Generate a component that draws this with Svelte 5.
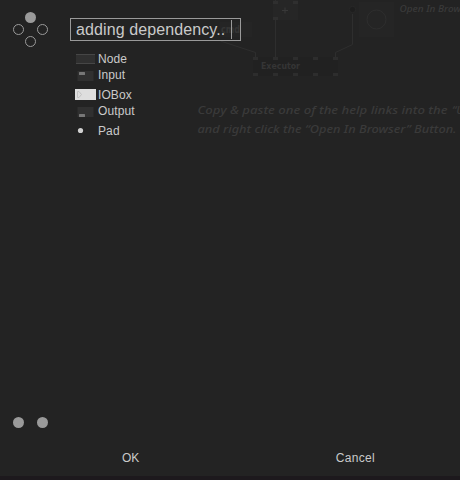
<script>
  const items = [
    { kind: 'node', label: 'Node', gap: 1 },
    { kind: 'input', label: 'Input', gap: 2 },
    { kind: 'iobox', label: 'IOBox', gap: 6 },
    { kind: 'output', label: 'Output', gap: 2 },
    { kind: 'pad', label: 'Pad', gap: 6 }
  ];
  const pins = [255, 275, 295, 315, 335];
</script>

<main>
  <svg class="patch" width="460" height="480" viewBox="0 0 460 480" aria-hidden="true">
    <rect x="220" y="22" width="32" height="15" fill="#252525" />
    <text x="221" y="33" font-size="10" font-weight="bold" textLength="19" lengthAdjust="spacingAndGlyphs">cmd</text>
    <rect x="273" y="0" width="25" height="20" fill="#262626" />
    <g fill="#2f2f2f">
      <rect x="273" y="1" width="5" height="3" />
      <rect x="293" y="1" width="5" height="3" />
      <rect x="273" y="17" width="5" height="3" />
    </g>
    <path d="M282 10.500h6M285 7.500v6" stroke="#383838" fill="none" />
    <g stroke="#2e2e2e" fill="none">
      <path d="M220.500 41L255.500 52.500V58M275.500 0V2M275.500 20V58M352.500 14V44.500L335.500 52.500V58" />
    </g>
    <rect x="253" y="57" width="85" height="19" fill="#212121" />
    <g fill="#2d2d2d">
      {#each pins as x}
        <rect x={x - 2} y="57" width="5" height="3" />
        <rect x={x - 2} y="73" width="5" height="3" />
      {/each}
    </g>
    <text x="261" y="69" font-size="9" font-weight="bold" textLength="39" lengthAdjust="spacingAndGlyphs">Executor</text>
    <circle cx="352.500" cy="9.500" r="3.200" fill="#1e1e1e" stroke="#282828" />
    <rect x="359" y="2" width="35" height="35" fill="#252525" />
    <circle cx="376.500" cy="19.500" r="9.500" fill="none" stroke="#2e2e2e" />
    <g class="note">
      <text x="399.500" y="12" font-size="9.500" textLength="75" lengthAdjust="spacingAndGlyphs">Open In Browser</text>
      <text x="197.500" y="114" font-size="11.500" textLength="250" lengthAdjust="spacingAndGlyphs">Copy &amp; paste one of the help links into the</text>
      <text x="452" y="114" font-size="11.500">“URL”</text>
      <text x="197.500" y="133" font-size="11.500" textLength="259" lengthAdjust="spacingAndGlyphs">and right click the “Open In Browser” Button.</text>
    </g>
  </svg>

  <div class="top">
    <svg class="dots" width="37" height="36" viewBox="0 0 37 36" aria-hidden="true">
      <circle cx="18.500" cy="5.500" r="5.500" fill="#9a9a9a" />
      <g fill="none" stroke="#9a9a9a">
        <circle cx="6.500" cy="17.500" r="5" />
        <circle cx="30.500" cy="17.500" r="5" />
        <circle cx="18.500" cy="29.500" r="5" />
      </g>
    </svg>
    <section>
      <div class="search"><span>adding dependency..</span><i></i></div>
      <ul>
        {#each items as item}
          <li style="margin-top: {item.gap}px">
            <svg width="22" height="14" viewBox="0 0 22 14" aria-hidden="true">
              {#if item.kind === 'node'}
                <rect x="1" y="2" width="19" height="10" fill="#303030" />
                <path d="M1 2.500h19M1 11.500h19" stroke="#464646" />
              {:else if item.kind === 'input'}
                <rect x="2.500" y="3" width="16" height="10" fill="#303030" />
                <rect x="4" y="4" width="6" height="3" rx="0.500" fill="#777" />
              {:else if item.kind === 'iobox'}
                <rect x="0" y="1" width="21" height="11" fill="#dedede" />
                <path d="M2.500 3.500H4L6.500 6.500L4 9.500H2.500Z" fill="none" stroke="#c2c2c2" />
              {:else if item.kind === 'output'}
                <rect x="2.500" y="3" width="16" height="10" fill="#303030" />
                <rect x="4" y="10" width="6" height="3" rx="0.500" fill="#777" />
              {:else}
                <circle cx="5.500" cy="6.500" r="2.600" fill="#d0d0d0" />
              {/if}
            </svg>
            <span>{item.label}</span>
          </li>
        {/each}
      </ul>
    </section>
  </div>

  <footer>
    <div class="pair"><i></i><i></i></div>
    <div class="buttons"><button>OK</button><button class="cancel">Cancel</button></div>
  </footer>
</main>

<style>
  :global(body) {
    background: #232323;
  }
  main {
    position: relative;
    display: flex;
    flex-direction: column;
    justify-content: space-between;
    box-sizing: border-box;
    width: 460px;
    height: 480px;
    overflow: hidden;
    background: #232323;
    border-bottom: 4px solid #1d191d;
    color: #cacaca;
    font-family: "Liberation Sans", Arial, sans-serif;
    font-size: 12px;
  }
  .patch {
    position: absolute;
    inset: 0;
  }
  .patch text {
    fill: #353535;
    font-family: "DejaVu Sans", Verdana, sans-serif;
  }
  .patch .note text {
    fill: #3a3a3a;
    font-family: "Noto Sans", sans-serif;
    font-style: italic;
    font-weight: 500;
  }
  .top {
    position: relative;
    display: flex;
    padding: 12px 0 0 12px;
  }
  .dots {
    flex: none;
    margin-right: 21px;
  }
  section {
    padding-top: 6px;
  }
  .search {
    display: flex;
    align-items: center;
    box-sizing: border-box;
    width: 171px;
    height: 23px;
    padding-left: 5px;
    border: 1px solid #9a9a9a;
    font-size: 16px;
    letter-spacing: 0.1px;
    white-space: nowrap;
  }
  .search span {
    width: 155px;
  }
  .search i {
    width: 1px;
    height: 19px;
    background: #9a9a9a;
  }
  ul {
    display: flex;
    flex-direction: column;
    margin: 10px 0 0 5px;
    padding: 0;
    list-style: none;
  }
  li {
    display: flex;
    align-items: center;
    height: 14px;
    line-height: 14px;
    letter-spacing: 0.1px;
  }
  li svg {
    flex: none;
    margin-right: 1px;
  }
  footer {
    position: relative;
  }
  .pair {
    display: flex;
    gap: 13px;
    padding-left: 13px;
  }
  .pair i {
    width: 11px;
    height: 11px;
    border-radius: 50%;
    background: #9a9a9a;
  }
  .buttons {
    display: flex;
    justify-content: space-between;
    padding: 23px 85px 11px 122px;
  }
  button {
    padding: 0;
    border: 0;
    background: none;
    color: inherit;
    font: inherit;
    line-height: 14px;
  }
  .cancel {
    letter-spacing: 0.3px;
  }
</style>
